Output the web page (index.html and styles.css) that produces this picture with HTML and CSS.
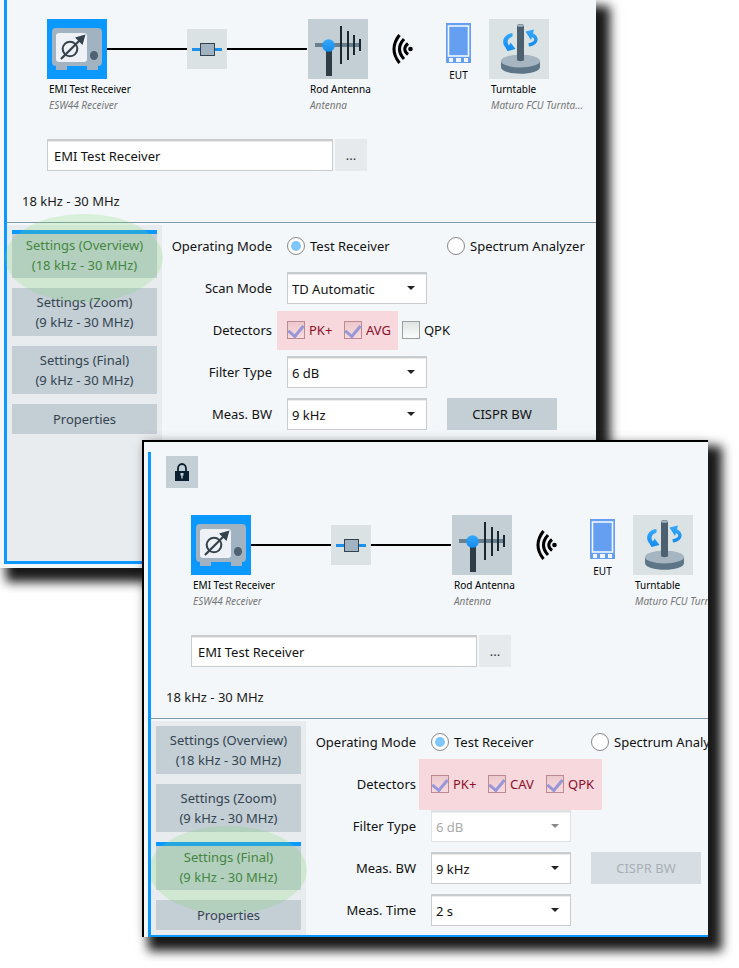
FILE: index.html
```html
<!DOCTYPE html>
<html lang="en">
<head>
<meta charset="utf-8">
<title>EMI Test Receiver Settings</title>
<link rel="stylesheet" href="styles.css">
</head>
<body>
<svg class="defs" aria-hidden="true">
  <defs>
    <linearGradient id="blue" x1="0" y1="0" x2="0" y2="1">
      <stop offset="0" stop-color="#37a9fb"/>
      <stop offset="1" stop-color="#128bec"/>
    </linearGradient>
  </defs>
  <symbol id="receiver" viewBox="0 0 60 60">
    <rect width="60" height="60" fill="#0c99ff"/>
    <path d="M9 44h11v7H9zM40 44h11v7H40z" fill="#a1b2c0"/>
    <rect x="5" y="9" width="50" height="38" rx="4" fill="#a1b2c0"/>
    <rect x="9" y="14" width="31" height="29" rx="3" fill="#eef1f6"/>
    <circle cx="23" cy="30" r="7.3" fill="none" stroke="#33424d" stroke-width="2"/>
    <path d="M14 40L34 20" stroke="#33424d" stroke-width="2.2"/>
    <path d="M38.500 15.500L28 18.500L35.500 26z" fill="#33424d"/>
    <ellipse cx="47" cy="36.500" rx="4" ry="4.500" fill="#4f6272"/>
  </symbol>
  <symbol id="attenuator" viewBox="0 0 40 40">
    <rect width="40" height="40" fill="#dae2e4"/>
    <path d="M5 20.500H35" stroke="#1e90e8" stroke-width="3"/>
    <rect x="13.500" y="14.500" width="14" height="12" fill="#a1b2c0" stroke="#33424d"/>
  </symbol>
  <symbol id="antenna" viewBox="0 0 60 60">
    <rect width="60" height="60" fill="#c3ced5"/>
    <rect x="18" y="30" width="6" height="27" fill="#2f3d47"/>
    <rect x="7" y="24" width="46" height="4" fill="#67818f"/>
    <path d="M33 7V45M40 12V41M46 16V36M52 20V32" stroke="#1c262e" stroke-width="2"/>
    <circle cx="20.500" cy="26.500" r="6.300" fill="url(#blue)"/>
  </symbol>
  <symbol id="waves" viewBox="0 0 22 30">
    <g fill="none" stroke="#000" stroke-width="3">
      <path d="M7.500 1Q-3.500 15 7.500 29"/>
      <path d="M12 5Q3 15 12 25"/>
      <path d="M16 9.500Q9.500 15 16 20.500"/>
    </g>
    <circle cx="18.500" cy="15" r="2.300"/>
  </symbol>
  <symbol id="eut" viewBox="0 0 25 40">
    <rect width="25" height="40" fill="#649ff2"/>
    <rect x="2.500" y="3" width="20" height="30" fill="none" stroke="#f3f7fa" stroke-width="1.600"/>
    <path d="M3 35h4v4H3zM10 35h5v4h-5zM18 35h4v4h-4z" fill="#f3f7fa"/>
  </symbol>
  <symbol id="turntable" viewBox="0 0 60 60">
    <rect width="60" height="60" fill="#dae2e4"/>
    <path d="M12 42v6c0 9 39 9 39 0v-6z" fill="#5d7587"/>
    <ellipse cx="31.500" cy="42" rx="19.500" ry="6.500" fill="#a5b5c1"/>
    <path d="M28 6.500c0-2 7-2 7 0V41c0 1.500-7 1.500-7 0z" fill="#4d6070"/>
    <ellipse cx="31.500" cy="6.500" rx="3.500" ry="1.300" fill="#a5b5c1"/>
    <g fill="url(#blue)">
      <path d="M23.500 14C16 14.500 11 22 16.500 28.500L18.500 32L26.500 30L21.500 23.500L20 26.500C17 23 19 19 23.500 17.500z"/>
      <path d="M36.500 12.500L45 10.500L44 14.500C51 17.500 50.500 26 40 27.500L39.500 24C46 23.500 46.500 19.500 43 18L42 21z"/>
    </g>
  </symbol>
  <symbol id="lock" viewBox="0 0 14 18">
    <path d="M3 9V5.500a4 4.500 0 0 1 8 0V9" fill="none" stroke="#0a1f30" stroke-width="1.800"/>
    <rect y="8" width="14" height="10" fill="#0a1f30"/>
    <path d="M5.500 10h3v2.500h-.8v3H6.300v-3h-.8z" fill="#c3ced5"/>
  </symbol>
</svg>

<main class="desk">
  <section class="window window-back" aria-label="Overview settings">
    <div class="pane">
      <div class="chain">
        <div class="node"><svg class="tile"><use href="#receiver"/></svg><span class="name">EMI Test Receiver</span><em class="model">ESW44 Receiver</em></div>
        <span class="wire"></span>
        <svg class="part"><use href="#attenuator"/></svg>
        <span class="wire gap"></span>
        <div class="node"><svg class="tile"><use href="#antenna"/></svg><span class="name">Rod Antenna</span><em class="model">Antenna</em></div>
        <svg class="waves"><use href="#waves"/></svg>
        <div class="eut"><svg class="phone"><use href="#eut"/></svg><span>EUT</span></div>
        <div class="node"><svg class="tile"><use href="#turntable"/></svg><span class="name">Turntable</span><em class="model">Maturo FCU Turnta...</em></div>
      </div>
      <div class="device"><input class="field" type="text" value="EMI Test Receiver" aria-label="Device"><button class="browse" type="button">...</button></div>
      <h2 class="range">18 kHz - 30 MHz</h2>
      <div class="body">
        <nav class="tabs">
          <button class="tab active" type="button"><span>Settings (Overview)</span><span>(18 kHz - 30 MHz)</span></button>
          <button class="tab" type="button"><span>Settings (Zoom)</span><span>(9 kHz - 30 MHz)</span></button>
          <button class="tab" type="button"><span>Settings (Final)</span><span>(9 kHz - 30 MHz)</span></button>
          <button class="tab short" type="button">Properties</button>
        </nav>
        <form class="form">
          <span class="label">Operating Mode</span>
          <label class="choice"><input type="radio" name="mode-a" checked>Test Receiver</label>
          <label class="choice"><input type="radio" name="mode-a">Spectrum Analyzer</label>
          <label class="label" for="scan-a">Scan Mode</label>
          <div class="select"><select id="scan-a"><option>TD Automatic</option></select></div>
          <span class="label">Detectors</span>
          <div class="checks">
            <div class="marked">
              <label class="choice"><input type="checkbox" checked>PK+</label>
              <label class="choice"><input type="checkbox" checked>AVG</label>
            </div>
            <label class="choice"><input type="checkbox">QPK</label>
          </div>
          <label class="label" for="filter-a">Filter Type</label>
          <div class="select"><select id="filter-a"><option>6 dB</option></select></div>
          <label class="label" for="bw-a">Meas. BW</label>
          <div class="select"><select id="bw-a"><option>9 kHz</option></select></div>
          <button class="action" type="button">CISPR BW</button>
        </form>
      </div>
    </div>
  </section>

  <section class="window window-front" aria-label="Final settings">
    <div class="pane">
      <div class="toolbar"><button class="lock" type="button" aria-label="Lock"><svg><use href="#lock"/></svg></button></div>
      <div class="chain">
        <div class="node"><svg class="tile"><use href="#receiver"/></svg><span class="name">EMI Test Receiver</span><em class="model">ESW44 Receiver</em></div>
        <span class="wire"></span>
        <svg class="part"><use href="#attenuator"/></svg>
        <span class="wire gap"></span>
        <div class="node"><svg class="tile"><use href="#antenna"/></svg><span class="name">Rod Antenna</span><em class="model">Antenna</em></div>
        <svg class="waves"><use href="#waves"/></svg>
        <div class="eut"><svg class="phone"><use href="#eut"/></svg><span>EUT</span></div>
        <div class="node"><svg class="tile"><use href="#turntable"/></svg><span class="name">Turntable</span><em class="model">Maturo FCU Turnta...</em></div>
      </div>
      <div class="device"><input class="field" type="text" value="EMI Test Receiver" aria-label="Device"><button class="browse" type="button">...</button></div>
      <h2 class="range">18 kHz - 30 MHz</h2>
      <div class="body">
        <nav class="tabs">
          <button class="tab" type="button"><span>Settings (Overview)</span><span>(18 kHz - 30 MHz)</span></button>
          <button class="tab" type="button"><span>Settings (Zoom)</span><span>(9 kHz - 30 MHz)</span></button>
          <button class="tab active" type="button"><span>Settings (Final)</span><span>(9 kHz - 30 MHz)</span></button>
          <button class="tab short" type="button">Properties</button>
        </nav>
        <form class="form">
          <span class="label">Operating Mode</span>
          <label class="choice"><input type="radio" name="mode-b" checked>Test Receiver</label>
          <label class="choice"><input type="radio" name="mode-b">Spectrum Analyzer</label>
          <span class="label">Detectors</span>
          <div class="checks">
            <div class="marked tall">
              <label class="choice"><input type="checkbox" checked>PK+</label>
              <label class="choice"><input type="checkbox" checked>CAV</label>
              <label class="choice"><input type="checkbox" checked>QPK</label>
            </div>
          </div>
          <label class="label" for="filter-b">Filter Type</label>
          <div class="select off"><select id="filter-b" disabled><option>6 dB</option></select></div>
          <label class="label" for="bw-b">Meas. BW</label>
          <div class="select"><select id="bw-b"><option>9 kHz</option></select></div>
          <button class="action" type="button" disabled>CISPR BW</button>
          <label class="label" for="time-b">Meas. Time</label>
          <div class="select"><select id="time-b"><option>2 s</option></select></div>
        </form>
      </div>
    </div>
  </section>
</main>
</body>
</html>
```
FILE: styles.css
```css
* { box-sizing: border-box; }

body {
  margin: 0;
  background: #fff;
  color: #1a1a1a;
  font: 13px/20px "Noto Sans", "Open Sans", sans-serif;
}

button, input, select {
  margin: 0;
  padding: 0;
  border: 0;
  border-radius: 0;
  font: inherit;
  color: inherit;
}

svg { display: block; flex: none; }
.defs { position: absolute; width: 0; height: 0; }

.desk { overflow: hidden; padding-bottom: 31px; }

.window {
  background: #f3f7fa;
  white-space: nowrap;
  box-shadow: 10px 10px 10px 4px #1a1a1a, 0 0 10px rgba(0, 0, 0, .12);
}
.window-back { margin-right: 143px; padding: 0 0 4px 4px; }
.window-front {
  position: relative;
  margin: -128px 31px 0 142px;
  padding: 10px 0 0 4px;
  border: solid #000;
  border-width: 2px 0 0 2px;
}
.window-front > .pane { overflow: hidden; border-bottom-width: 2px; }

.pane {
  border: solid #0c99ff;
  border-width: 0 0 3px 3px;
}

.toolbar { padding: 4px 15px 8px; }
.lock {
  display: grid;
  place-items: center;
  width: 32px;
  height: 32px;
  background: #c3ced5;
}
.lock svg { width: 14px; height: 18px; }

.chain {
  display: flex;
  align-items: flex-start;
  height: 139px;
  padding: 19px 0 0 40px;
}
.node { flex: none; width: 60px; font-size: 10px; line-height: 16px; color: #000; }
.tile { width: 60px; height: 60px; margin-bottom: 2px; }
.name, .model { display: block; padding-left: 2px; }
.model { color: #777; }
.wire { flex: none; width: 80px; height: 2px; margin-top: 29px; background: #000; }
.wire.gap { margin-right: 1px; }
.part { width: 40px; height: 40px; margin-top: 10px; }
.waves { width: 22px; height: 30px; margin: 15px 32px 0 24px; }
.eut {
  flex: none;
  width: 25px;
  margin: 4px 18px 0 0;
  font-size: 10px;
  line-height: 16px;
  color: #000;
  display: flex;
  flex-direction: column;
  align-items: center;
  gap: 4px;
}
.phone { width: 25px; height: 40px; }

.device { display: flex; gap: 2px; padding-left: 40px; }
.field, .select select {
  height: 32px;
  border: 1px solid #c9cccf;
  border-top-width: 2px;
  background: #fff;
  box-shadow: inset 0 1px #ececec;
  color: #111;
}
.field { width: 286px; padding: 0 6px; }
.browse { width: 32px; height: 32px; background: #e6eaed; color: #333; }

.range {
  margin: 0;
  padding: 20px 0 11px 15px;
  border-bottom: 1px solid #7f98aa;
  font-size: 13px;
  font-weight: 400;
  line-height: 20px;
}

.body { display: flex; padding-top: 2px; }

.tabs {
  flex: none;
  display: flex;
  flex-direction: column;
  gap: 10px;
  width: 155px;
  padding: 5px 5px 127px;
  background: #e8ecef;
}
.window-front .tabs { padding-bottom: 5px; }
.tab {
  position: relative;
  display: flex;
  flex-direction: column;
  align-items: center;
  justify-content: center;
  height: 48px;
  background: #c3ced5;
  color: #33444f;
}
.tab.short { height: 30px; }
.tab.active { color: #347036; border-top: 4px solid #0c99ff; padding-bottom: 2px; }
.tab.active::after {
  content: "";
  position: absolute;
  z-index: 1;
  inset: -20px -6px -24px -7px;
  border-radius: 50%;
  background: rgba(122, 215, 105, .22);
  pointer-events: none;
}

.form {
  flex: none;
  display: grid;
  grid-template-columns: 110px 140px 150px;
  grid-auto-rows: 32px;
  gap: 10px 20px;
  padding: 5px 0 0;
  align-items: center;
}
.label { grid-column: 1; text-align: right; color: #111; }
.label + * { margin-left: -5px; }
.label ~ .action, .label ~ .choice { margin-left: -5px; }

.choice { display: flex; align-items: center; gap: 5px; color: #111; }
.choice input {
  appearance: none;
  flex: none;
  display: grid;
  place-items: center;
  width: 18px;
  height: 18px;
  border: 1px solid #888;
  background: #fff;
}
.choice input[type="radio"] { border-radius: 50%; }
.choice input[type="radio"]:checked::after {
  content: "";
  width: 10px;
  height: 10px;
  border-radius: 50%;
  background: #80c6fc;
}
.choice input[type="checkbox"] {
  border-color: #9a9fa0;
  background: linear-gradient(#dfe5e4, #fafcfb);
}
.choice input[type="checkbox"]:checked::after {
  content: "";
  width: 7px;
  height: 12px;
  margin-bottom: 3px;
  border: solid #9898d8;
  border-width: 0 3px 3px 0;
  transform: rotate(40deg);
}

.checks { display: flex; align-items: center; gap: 4px; grid-column: 2 / -1; }
.marked {
  display: flex;
  align-items: center;
  height: 39px;
  margin-left: -10px;
  padding: 0 7px 0 10px;
  background: #f7d8dc;
}
.marked.tall { height: 51px; margin-left: -12px; padding: 0 8px 0 12px; }
.marked .choice { width: 58px; color: #8b0f2b; }
.marked .choice:first-child { width: 57px; }
.marked .choice:last-child { width: auto; }
.checks .choice { gap: 4px; margin: 0; }
.marked .choice input[type="checkbox"] {
  border-color: #bd8a91;
  background: linear-gradient(#ecc8cc, #f8dadd);
}

.select { position: relative; }
.select select { appearance: none; width: 140px; padding: 0 4px; display: block; }
.select::after {
  content: "";
  position: absolute;
  top: 14px;
  right: 17px;
  border: 4px solid transparent;
  border-top-color: #222;
  border-bottom: 0;
  pointer-events: none;
}
.select.off select { border-color: #dfe2e4; color: #aaa; opacity: 1; }
.select.off::after { border-top-color: #888; }

.action { width: 110px; height: 32px; background: #c3ced5; color: #111; }
.action:disabled { background: #d6dee3; color: #a9afb3; }
```
